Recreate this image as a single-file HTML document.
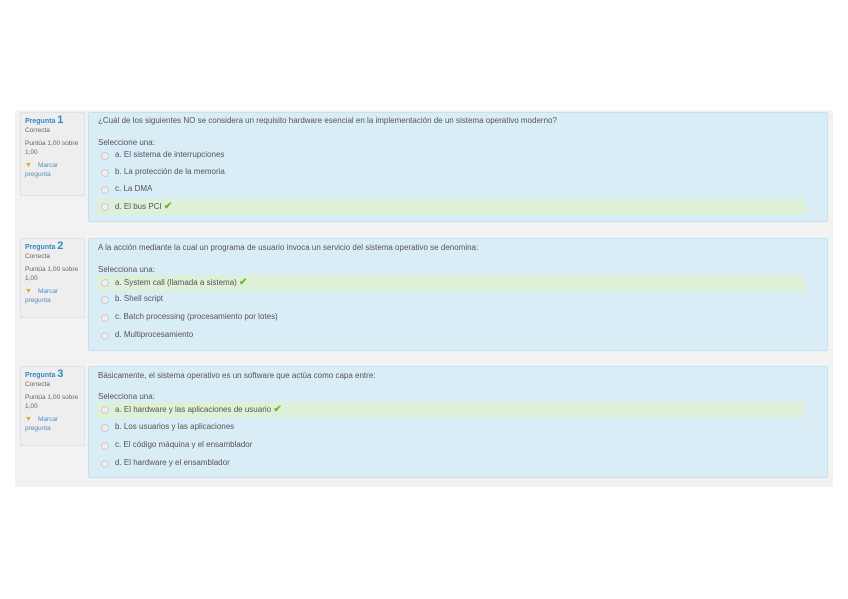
<!DOCTYPE html>
<html><head><meta charset="utf-8"><style>
body{margin:0;width:848px;height:599px;background:#fff;position:relative;overflow:hidden;font-family:"Liberation Sans",sans-serif;color:#555;}
.bg{position:absolute;left:15px;top:110px;width:818px;height:377px;background:#f2f2f2;}
.info{position:absolute;left:20px;width:65px;background:#eeeeee;border:1px solid #e2e2e2;box-sizing:border-box;font-size:6.5px;color:#666;padding:3px 4px;line-height:9px;}
.info .t{color:#2a8fc4;font-weight:bold;font-size:7px;}
.info .t b{font-size:11px;}
.info .f{color:#4a8fc0;}
.info .f:before{content:"▼";color:#f0a020;font-size:7px;margin-right:6px;}
.box{position:absolute;left:88px;width:740px;background:#d9edf7;border:1px solid #c7e2ef;box-sizing:border-box;border-radius:2px;}
.tx{position:absolute;font-size:8px;white-space:nowrap;color:#555;}
.hl{position:absolute;left:97px;width:708px;height:16px;background:#dff0d8;}
.r{position:absolute;width:6px;height:6px;border-radius:50%;border:1px solid #ccc;background:#eee;}
.ck{color:#6fba2c;font-weight:bold;font-size:10px;}
</style></head><body>
<div class="bg"></div>

<div class="info" style="top:112px;height:84px"><div class="t">Pregunta <b>1</b></div>Correcta<div style="margin-top:4px">Puntúa 1,00 sobre 1,00</div><div class="f" style="margin-top:4px">Marcar pregunta</div></div>
<div class="box" style="top:112px;height:110px"></div>
<div class="tx" style="left:98px;top:116px">¿Cuál de los siguientes NO se considera un requisito hardware esencial en la implementación de un sistema operativo moderno?</div>
<div class="tx" style="left:98px;top:138px">Seleccione una:</div>
<div class="r" style="left:101px;top:152px"></div><div class="tx" style="left:115px;top:150px">a. El sistema de interrupciones</div>
<div class="r" style="left:101px;top:169px"></div><div class="tx" style="left:115px;top:167px">b. La protección de la memoria</div>
<div class="r" style="left:101px;top:186px"></div><div class="tx" style="left:115px;top:184px">c. La DMA</div>
<div class="hl" style="top:199px"></div>
<div class="r" style="left:101px;top:203px"></div><div class="tx" style="left:115px;top:201px">d. El bus PCI <span class="ck">✔</span></div>

<div class="info" style="top:238px;height:80px"><div class="t">Pregunta <b>2</b></div>Correcta<div style="margin-top:4px">Puntúa 1,00 sobre 1,00</div><div class="f" style="margin-top:4px">Marcar pregunta</div></div>
<div class="box" style="top:238px;height:113px"></div>
<div class="tx" style="left:98px;top:243px">A la acción mediante la cual un programa de usuario invoca un servicio del sistema operativo se denomina:</div>
<div class="tx" style="left:98px;top:265px">Selecciona una:</div>
<div class="hl" style="top:275px"></div>
<div class="r" style="left:101px;top:279px"></div><div class="tx" style="left:115px;top:277px">a. System call (llamada a sistema) <span class="ck">✔</span></div>
<div class="r" style="left:101px;top:296px"></div><div class="tx" style="left:115px;top:294px">b. Shell script</div>
<div class="r" style="left:101px;top:314px"></div><div class="tx" style="left:115px;top:312px">c. Batch processing (procesamiento por lotes)</div>
<div class="r" style="left:101px;top:332px"></div><div class="tx" style="left:115px;top:330px">d. Multiprocesamiento</div>

<div class="info" style="top:366px;height:80px"><div class="t">Pregunta <b>3</b></div>Correcta<div style="margin-top:4px">Puntúa 1,00 sobre 1,00</div><div class="f" style="margin-top:4px">Marcar pregunta</div></div>
<div class="box" style="top:366px;height:112px"></div>
<div class="tx" style="left:98px;top:371px">Básicamente, el sistema operativo es un software que actúa como capa entre:</div>
<div class="tx" style="left:98px;top:392px">Selecciona una:</div>
<div class="hl" style="top:402px"></div>
<div class="r" style="left:101px;top:406px"></div><div class="tx" style="left:115px;top:404px">a. El hardware y las aplicaciones de usuario <span class="ck">✔</span></div>
<div class="r" style="left:101px;top:424px"></div><div class="tx" style="left:115px;top:422px">b. Los usuarios y las aplicaciones</div>
<div class="r" style="left:101px;top:442px"></div><div class="tx" style="left:115px;top:440px">c. El código máquina y el ensamblador</div>
<div class="r" style="left:101px;top:460px"></div><div class="tx" style="left:115px;top:458px">d. El hardware y el ensamblador</div>
</body></html>
